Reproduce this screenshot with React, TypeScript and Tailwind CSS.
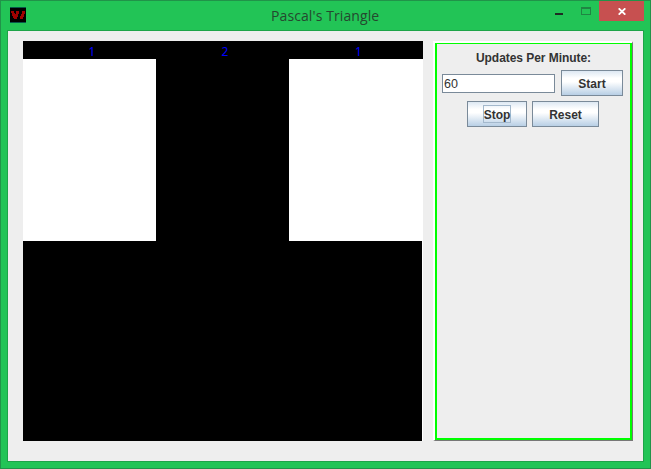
import React from "react";

function SwingButton({ label, size, focused = false }: { label: string; size: string; focused?: boolean }) {
  return (
    <button
      className={`${size} flex h-[26px] shrink-0 items-center justify-center border border-[#7a8a99] bg-[linear-gradient(to_bottom,#dde8f3_0%,#ffffff_30%,#ffffff_45%,#b8cfe5_100%)] text-[12px] leading-none font-bold text-[#333333]`}
    >
      <span
        className={
          focused ? "flex h-[18px] w-7 items-center justify-center border border-[#a3b8cc] pt-0.5" : "pt-0.5"
        }
      >
        {label}
      </span>
    </button>
  );
}

function Cell({ value, size, filled }: { value: number; size: string; filled: boolean }) {
  return (
    <div className={`${size} flex flex-col`}>
      <div className="flex h-[18px] items-center justify-center bg-black pt-[3px] pl-[5px] font-['Noto_Sans',sans-serif] text-[12px] leading-none text-[#0000ff]">
        {value}
      </div>
      <div className={`h-[182px] ${filled ? "bg-white" : "bg-black"}`} />
    </div>
  );
}

function TitleBar() {
  return (
    <header className="flex h-[29px] items-start">
      <svg className="mt-1.5 ml-[3px] h-4 w-4 shrink-0" viewBox="0 0 16 16" shapeRendering="crispEdges">
        <path d="M0 0h16v16H0z" fill="#000" />
        <path d="M0 0h16v1H0zM0 15h16v1H0z" fill="#07584a" />
        <path
          d="M1 4h3v2h1v1h1V4h3v3H8v3H7v2H4v-1H3V9H2V6H1zM12 4h3v3h-1v3h-1v2h-3V9h1V7h1z"
          fill="#a00000"
        />
      </svg>
      <h1 className="mt-[5px] ml-[245px] w-[112px] text-left font-['Open_Sans',sans-serif] text-[14px] leading-5 tracking-[0.1px] whitespace-nowrap text-[#25482f]">
        Pascal's Triangle
      </h1>
      <div className="ml-auto flex h-5">
        <div className="mt-3 mr-[18px] h-0.5 w-2 bg-[#1f2b23]" />
        <div className="mt-1.5 mr-2 h-2 w-2.5 border border-t-2 border-[#208543]" />
        <div className="flex h-5 w-[45px] items-center justify-center bg-[#c75050]">
          <svg className="h-[7px] w-2" viewBox="0 0 8 7">
            <path d="M.7.3 7.3 6.7M7.3.3.7 6.7" stroke="#fff" strokeWidth="1.8" />
          </svg>
        </div>
      </div>
    </header>
  );
}

export default function App() {
  return (
    <main className="h-[469px] w-[651px] border border-[#219349] bg-[#22c456] pr-1.5 pl-1.5 font-['Liberation_Sans',sans-serif]">
      <TitleBar />
      <section className="flex h-[432px] w-[637px] border border-[#1da448] bg-[#eeeeee] pt-2.5 pl-[15px]">
        <div className="h-[400px] w-[400px] bg-white">
          <div className="flex h-[200px]">
            <Cell value={1} size="w-[133px]" filled />
            <Cell value={2} size="w-[133px]" filled={false} />
            <Cell value={1} size="w-[134px]" filled />
          </div>
          <div className="h-[200px] w-[399px] bg-black" />
        </div>
        <aside className="ml-2.5 h-[400px] w-[200px] border-t-2 border-r border-b border-l-2 border-t-white border-r-[#777777] border-b-[#777777] border-l-white">
          <div className="h-[397px] w-[197px] border-2 border-t border-[#00ff00] pt-1.5">
            <div className="flex h-4 items-center justify-center text-[12px] font-bold tracking-[-0.05px] text-[#333333]">
              Updates Per Minute:
            </div>
            <div className="mt-1 flex items-center pl-[5px]">
              <input
                className="mr-1.5 h-[19px] w-[113px] border border-[#7a8a99] bg-white px-px pt-px text-[12.5px] text-[#333333] outline-none"
                defaultValue="60"
              />
              <SwingButton label="Start" size="w-[62px]" />
            </div>
            <div className="mt-[5px] flex gap-[5px] pl-[30px]">
              <SwingButton label="Stop" size="w-[60px]" focused />
              <SwingButton label="Reset" size="w-[67px]" />
            </div>
          </div>
        </aside>
      </section>
    </main>
  );
}
